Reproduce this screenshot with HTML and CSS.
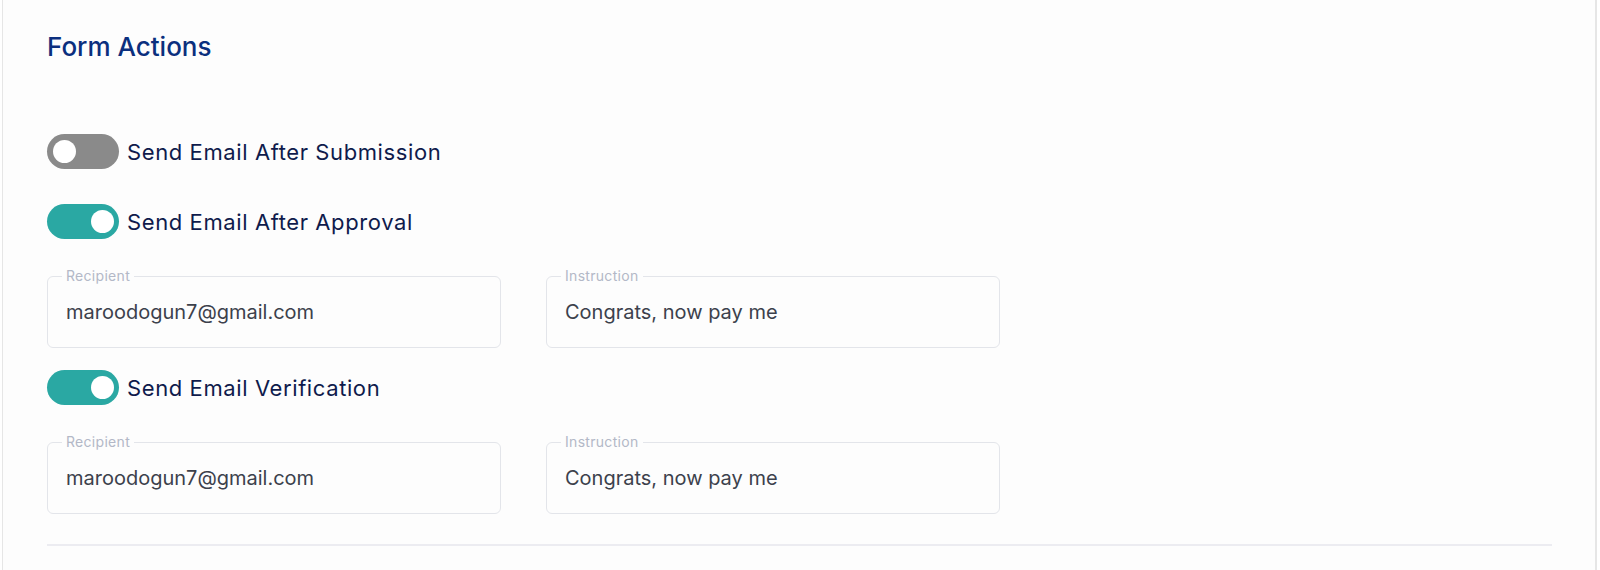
FILE: index.html
```html
<!DOCTYPE html>
<html lang="en">
<head>
<meta charset="utf-8">
<title>Form Actions</title>
<link rel="stylesheet" href="styles.css">
</head>
<body>
<div class="page">
  <section class="card">
    <h2 class="card-title">Form Actions</h2>
    <div class="actions">
      <div class="action">
        <label class="switch-row">
          <span class="switch"><span class="knob"></span></span>
          <span class="switch-label">Send Email After Submission</span>
        </label>
      </div>
      <div class="action with-fields">
        <label class="switch-row">
          <span class="switch on"><span class="knob"></span></span>
          <span class="switch-label">Send Email After Approval</span>
        </label>
        <div class="fields">
          <fieldset class="field">
            <legend>Recipient</legend>
            <div class="value">maroodogun7@gmail.com</div>
          </fieldset>
          <fieldset class="field">
            <legend>Instruction</legend>
            <div class="value">Congrats, now pay me</div>
          </fieldset>
        </div>
      </div>
      <div class="action with-fields">
        <label class="switch-row">
          <span class="switch on"><span class="knob"></span></span>
          <span class="switch-label">Send Email Verification</span>
        </label>
        <div class="fields">
          <fieldset class="field">
            <legend>Recipient</legend>
            <div class="value">maroodogun7@gmail.com</div>
          </fieldset>
          <fieldset class="field">
            <legend>Instruction</legend>
            <div class="value">Congrats, now pay me</div>
          </fieldset>
        </div>
      </div>
    </div>
    <hr class="divider">
  </section>
</div>
</body>
</html>
```
FILE: styles.css
```css
* { box-sizing: border-box; }
html, body { margin: 0; padding: 0; }
body {
  background: #ffffff;
  font-family: Inter, "Noto Sans", sans-serif;
  color: #0f1b4c;
}
.page {
  padding: 0 3px 0 2px;
}
.card {
  min-height: 570px;
  border-left: 1px solid #e6e6e6;
  border-right: 2px solid #e6e6e6;
  background: #fdfdfd;
  padding: 31px 43px 0 44px;
}
.card-title {
  margin: 0;
  font-size: 26px;
  font-weight: 500;
  line-height: 32px;
  color: #0b2f7e;
}
.actions {
  margin-top: 71px;
  display: flex;
  flex-direction: column;
}
.action + .action { margin-top: 35px; }
.action.with-fields + .action { margin-top: 22px; }
.switch-row {
  display: flex;
  align-items: center;
  gap: 8px;
  cursor: pointer;
}
.switch {
  position: relative;
  width: 72px;
  height: 35px;
  border-radius: 18px;
  background: #8a8a8a;
  flex: none;
}
.switch.on { background: #2aa8a3; }
.knob {
  position: absolute;
  top: 6px;
  left: 6px;
  width: 23px;
  height: 23px;
  border-radius: 50%;
  background: #ffffff;
}
.switch.on .knob { left: auto; right: 5px; }
.switch-label {
  font-size: 22px;
  letter-spacing: 0.6px;
  line-height: 28px;
  color: #0f1b4c;
}
.fields {
  display: flex;
  gap: 45px;
  margin-top: 29px;
}
.field {
  margin: 0;
  width: 454px;
  height: 80px;
  border: 1px solid #e3e5ea;
  border-radius: 6px;
  padding: 0 17px 0 18px;
  min-width: 0;
}
.field legend {
  padding: 0 4px;
  margin-left: -4px;
  font-size: 14px;
  letter-spacing: 0.3px;
  line-height: 16px;
  color: #b3b8c7;
}
.value {
  font-size: 20px;
  line-height: 24px;
  color: #3c414c;
  padding-top: 16px;
}
.divider {
  margin: 30px 0 0 0;
  border: 0;
  height: 2px;
  background: #ececf1;
}
```
